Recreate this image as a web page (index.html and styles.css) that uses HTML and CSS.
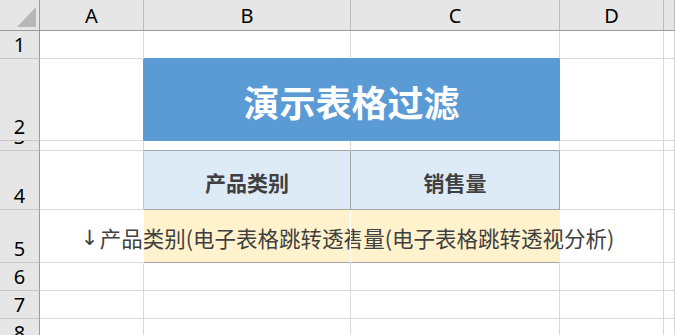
FILE: index.html
```html
<!DOCTYPE html>
<html lang="zh-CN">
<head>
    <meta charset="UTF-8">
    <title>演示表格过滤</title>
    <link rel="stylesheet" href="styles.css">
</head>
<body>
    <div class="sheet">
        <!-- 列标题 -->
        <div class="corner">
            <svg width="39" height="30" viewBox="0 0 39 30"><polygon points="36,7 36,27 17,27" fill="#b7b7b7"/></svg>
        </div>
        <div class="ch">A</div>
        <div class="ch">B</div>
        <div class="ch">C</div>
        <div class="ch">D</div>
        <div class="ch"></div>

        <!-- 第1行 -->
        <div class="rh">1</div>
        <div class="cell"></div>
        <div class="cell under-title"></div>
        <div class="cell under-title"></div>
        <div class="cell"></div>
        <div class="cell"></div>

        <!-- 第2行 标题 -->
        <div class="rh">2</div>
        <div class="cell beside-title"></div>
        <div class="cell title">演示表格过滤</div>
        <div class="cell"></div>
        <div class="cell"></div>

        <!-- 第3行 -->
        <div class="rh">3</div>
        <div class="cell"></div>
        <div class="cell above-head"></div>
        <div class="cell above-head"></div>
        <div class="cell"></div>
        <div class="cell"></div>

        <!-- 第4行 表头 -->
        <div class="rh">4</div>
        <div class="cell beside-head"></div>
        <div class="cell th">产品类别</div>
        <div class="cell th">销售量</div>
        <div class="cell"></div>
        <div class="cell"></div>

        <!-- 第5行 筛选 -->
        <div class="rh">5</div>
        <div class="cell overflowed"></div>
        <div class="cell td td-left"><span class="spill"><span class="arrow">↓</span>产品类别(电子表格跳转透视分析)</span></div>
        <div class="cell td td-right"><span class="spill">↓ 销售量(电子表格跳转透视分析)</span></div>
        <div class="cell"></div>
        <div class="cell"></div>

        <div class="rh">6</div>
        <div class="cell"></div>
        <div class="cell"></div>
        <div class="cell"></div>
        <div class="cell"></div>
        <div class="cell"></div>

        <div class="rh">7</div>
        <div class="cell"></div>
        <div class="cell"></div>
        <div class="cell"></div>
        <div class="cell"></div>
        <div class="cell"></div>

        <div class="rh">8</div>
        <div class="cell"></div>
        <div class="cell"></div>
        <div class="cell"></div>
        <div class="cell"></div>
        <div class="cell"></div>
    </div>
</body>
</html>
```

FILE: styles.css
```css
body {
    margin: 0;
    background: #fff;
    font-family: "Noto Sans CJK SC", sans-serif;
}

.sheet {
    display: grid;
    grid-template-columns: 40px 104px 207px 209px 104px 1fr;
    grid-template-rows: 31px 28px 82px 10px 59px 53px 28px 28px 28px;
    width: 675px;
    height: 335px;
    overflow: hidden;
}

.sheet > div {
    box-sizing: border-box;
}

/* 行列标题 */
.corner {
    background: #e6e6e6;
    border-right: 1px solid #9b9b9b;
    border-bottom: 1px solid #9b9b9b;
}

.corner svg {
    display: block;
}

.ch,
.rh {
    background: #e6e6e6;
    display: flex;
    justify-content: center;
    align-items: flex-end;
    font-family: "Noto Sans", sans-serif;
    font-size: 20px;
    line-height: 20px;
    color: #000;
    overflow: hidden;
}

.ch {
    border-right: 1px solid #bcbcbc;
    border-bottom: 1px solid #9b9b9b;
    padding-bottom: 4px;
}

.rh {
    border-right: 1px solid #9b9b9b;
    border-bottom: 1px solid #c6c6c6;
    padding-bottom: 3px;
}

/* 单元格 */
.cell {
    border-right: 1px solid #d9d9d9;
    border-bottom: 1px solid #d9d9d9;
}

.under-title {
    border-bottom-color: #5b9bd5;
}

.beside-title {
    border-right-color: #5b9bd5;
}

.title {
    grid-column: span 2;
    background: #5b9bd5;
    border-color: #5b9bd5;
    color: #fff;
    font-size: 36px;
    font-weight: 700;
    display: flex;
    align-items: center;
    justify-content: center;
    padding-top: 3px;
}

.above-head {
    border-bottom-color: #a6a6a6;
}

.beside-head {
    border-right-color: #c4c4c4;
}

.th {
    background: #ddebf7;
    border-right-color: #a6a6a6;
    border-bottom-color: #a6a6a6;
    color: #404040;
    font-size: 21px;
    font-weight: 700;
    display: flex;
    align-items: center;
    justify-content: center;
    padding-top: 4px;
}

.overflowed {
    border-right-color: transparent;
}

.td {
    position: relative;
    background: #fff2cc;
    border-bottom-color: #a6a6a6;
    color: #404040;
    font-size: 21.5px;
}

.td-left {
    border-right-color: #a6a6a6;
    clip-path: inset(0 1px 0 -300px);
}

.td-right {
    border-right-color: transparent;
    clip-path: inset(0 -300px 0 0);
}

.spill {
    position: absolute;
    top: 0;
    bottom: 0;
    left: 50%;
    transform: translateX(-50%);
    display: flex;
    align-items: center;
    padding-top: 3px;
    white-space: nowrap;
}

.td-left .spill {
    transform: translateX(calc(-50% + 1px));
}

.td-right .spill {
    transform: translateX(calc(-50% - 1px));
}

.arrow {
    font-family: "DejaVu Sans", sans-serif;
    font-size: 21px;
    width: 16px;
    margin-right: 3px;
}
```
